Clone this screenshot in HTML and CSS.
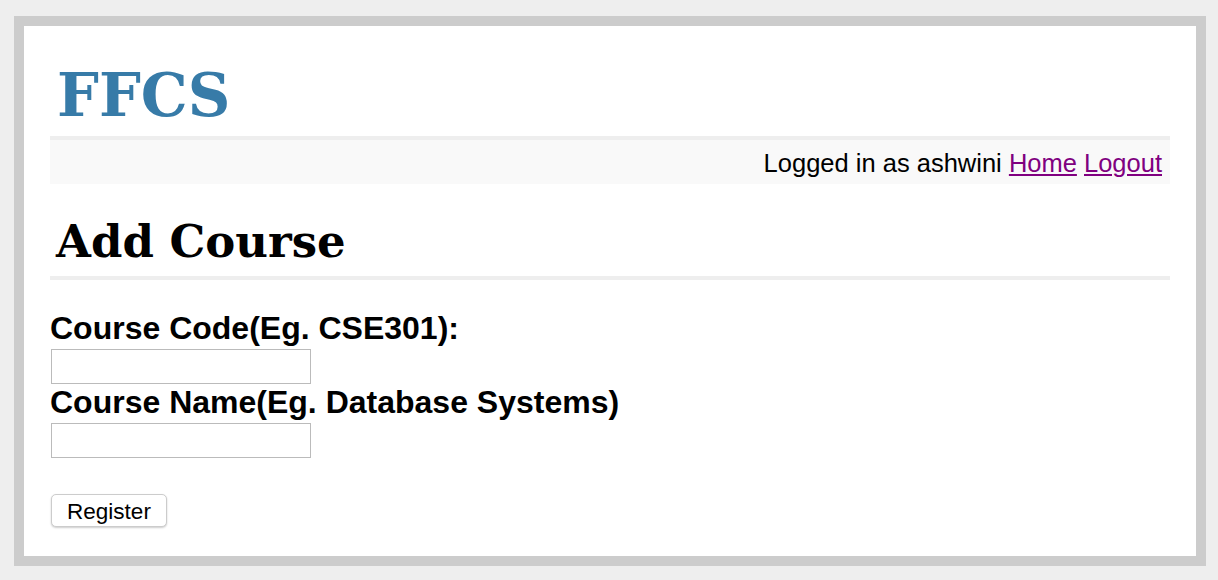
FILE: index.html
```html
<!DOCTYPE html>
<html>
<head>
<meta charset="utf-8">
<title>FFCS - Add Course</title>
<link rel="stylesheet" href="styles.css">
</head>
<body>
<div class="page">
  <h1 class="logo">FFCS</h1>
  <div class="metanav">Logged in as ashwini <a href="#">Home</a> <a href="#">Logout</a></div>
  <h2 class="title">Add Course</h2>
  <form class="form">
    <label class="label">Course Code(Eg. CSE301):</label>
    <input class="field" type="text">
    <label class="label">Course Name(Eg. Database Systems)</label>
    <input class="field" type="text">
    <div class="actions"><button class="btn" type="button">Register</button></div>
  </form>
</div>
</body>
</html>
```
FILE: styles.css
```css
html, body {
  margin: 0;
  padding: 0;
  background: #eeeeee;
}
body {
  padding: 16px 12px 14px 14px;
  font-family: "Liberation Sans", Arial, sans-serif;
}
.page {
  background: #ffffff;
  border: 10px solid #cccccc;
  padding: 0 26px;
  height: 550px;
  box-sizing: border-box;
}
.logo {
  margin: 0;
  padding: 40px 0 10px 7px;
  font-family: "DejaVu Serif", Georgia, serif;
  font-weight: bold;
  font-size: 59px;
  line-height: 60px;
  color: #377ba8;
}
.metanav {
  border-top: 4px solid #eeeeee;
  background: #f9f9f9;
  height: 44px;
  line-height: 46px;
  text-align: right;
  padding-right: 8px;
  font-size: 25.5px;
  color: #000;
  overflow: hidden;
}
.metanav a {
  color: #800080;
}
.title {
  margin: 0;
  padding: 31px 0 7px 6px;
  font-family: "DejaVu Serif", Georgia, serif;
  font-weight: bold;
  font-size: 45px;
  line-height: 54px;
  border-bottom: 4px solid #eeeeee;
}
.form {
  display: flex;
  flex-direction: column;
  align-items: flex-start;
  padding-top: 30px;
}
.label {
  font-weight: bold;
  font-size: 32px;
  line-height: 34px;
  padding: 1px 0 4px 0;
}
.field {
  width: 260px;
  height: 35px;
  box-sizing: border-box;
  margin: 0 0 0 1px;
  border: 1px solid #bbbbbb;
  padding: 0;
}
.actions {
  margin-top: 36px;
}
.btn {
  margin-left: 1px;
  width: 116px;
  height: 33px;
  background: #fff;
  border: 1px solid #cccccc;
  border-radius: 5px;
  box-shadow: 0 1px 2px rgba(0,0,0,0.2);
  font-family: "Liberation Sans", Arial, sans-serif;
  font-size: 22.5px;
  color: #000;
  padding: 3px 0 0 0;
}
```
